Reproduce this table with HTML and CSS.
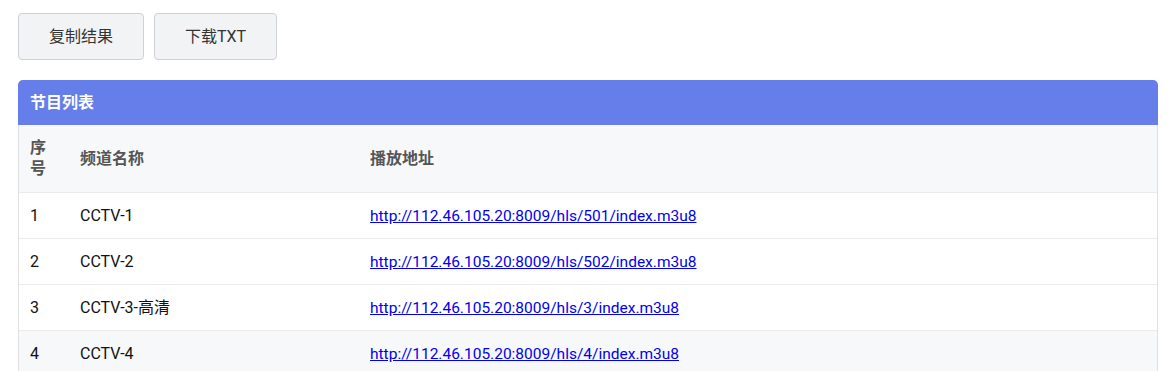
FILE: index.html
```html
<!DOCTYPE html>
<html lang="zh-CN">
<head>
<meta charset="utf-8">
<title>节目列表</title>
<link rel="stylesheet" href="styles.css">
</head>
<body>
<div class="page">
  <div class="actions">
    <button class="btn" type="button">复制结果</button>
    <button class="btn" type="button">下载TXT</button>
  </div>
  <section class="card">
    <div class="card-header">节目列表</div>
    <div class="card-body">
      <table class="list">
        <thead>
          <tr>
            <th class="col-no">序号</th>
            <th class="col-name">频道名称</th>
            <th>播放地址</th>
          </tr>
        </thead>
        <tbody>
          <tr><td>1</td><td>CCTV-1</td><td><a href="#">http://112.46.105.20:8009/hls/501/index.m3u8</a></td></tr>
          <tr><td>2</td><td>CCTV-2</td><td><a href="#">http://112.46.105.20:8009/hls/502/index.m3u8</a></td></tr>
          <tr><td>3</td><td>CCTV-3-高清</td><td><a href="#">http://112.46.105.20:8009/hls/3/index.m3u8</a></td></tr>
          <tr class="alt"><td>4</td><td>CCTV-4</td><td><a href="#">http://112.46.105.20:8009/hls/4/index.m3u8</a></td></tr>
        </tbody>
      </table>
    </div>
  </section>
</div>
</body>
</html>
```

FILE: styles.css
```css
html, body {
  margin: 0;
  padding: 0;
  background: #ffffff;
}
body {
  font-family: Roboto, "Noto Sans CJK SC", sans-serif;
  color: #222;
  font-size: 16px;
}
.page {
  padding: 13px 13px 0 18px;
}
.actions {
  display: flex;
  gap: 10px;
  margin-bottom: 20px;
}
.btn {
  font-family: Roboto, "Noto Sans CJK SC", sans-serif;
  font-size: 16px;
  line-height: 21px;
  color: #333;
  background: #f2f3f5;
  border: 1px solid #cfd1d6;
  border-radius: 4px;
  padding: 12px 30px;
  cursor: pointer;
}
.card {
  width: 1140px;
  border-radius: 5px 5px 0 0;
  overflow: hidden;
}
.card-header {
  background: #667eea;
  color: #fff;
  font-weight: bold;
  font-size: 16px;
  line-height: 25px;
  padding: 10px 12px;
}
.card-body {
  border-left: 1px solid #e0e0e0;
  border-right: 1px solid #e0e0e0;
}
.list {
  width: 100%;
  border-collapse: collapse;
}
.list th, .list td {
  text-align: left;
  padding: 12px 12px 12px 11px;
  line-height: 21px;
  border-bottom: 1px solid #ebebeb;
  vertical-align: middle;
}
.list th {
  padding-bottom: 13px;
  background: #f7f8fa;
  color: #555;
  font-weight: bold;
}
.list td {
  color: #111;
}
.col-no {
  width: 27px;
  word-break: break-all;
}
.col-name {
  width: 267px;
}
.list tr.alt td {
  background: #f7f8fa;
}
.list a {
  font-size: 15.5px;
  line-height: 16px;
  color: #0000ee;
  text-decoration: underline;
}
```
